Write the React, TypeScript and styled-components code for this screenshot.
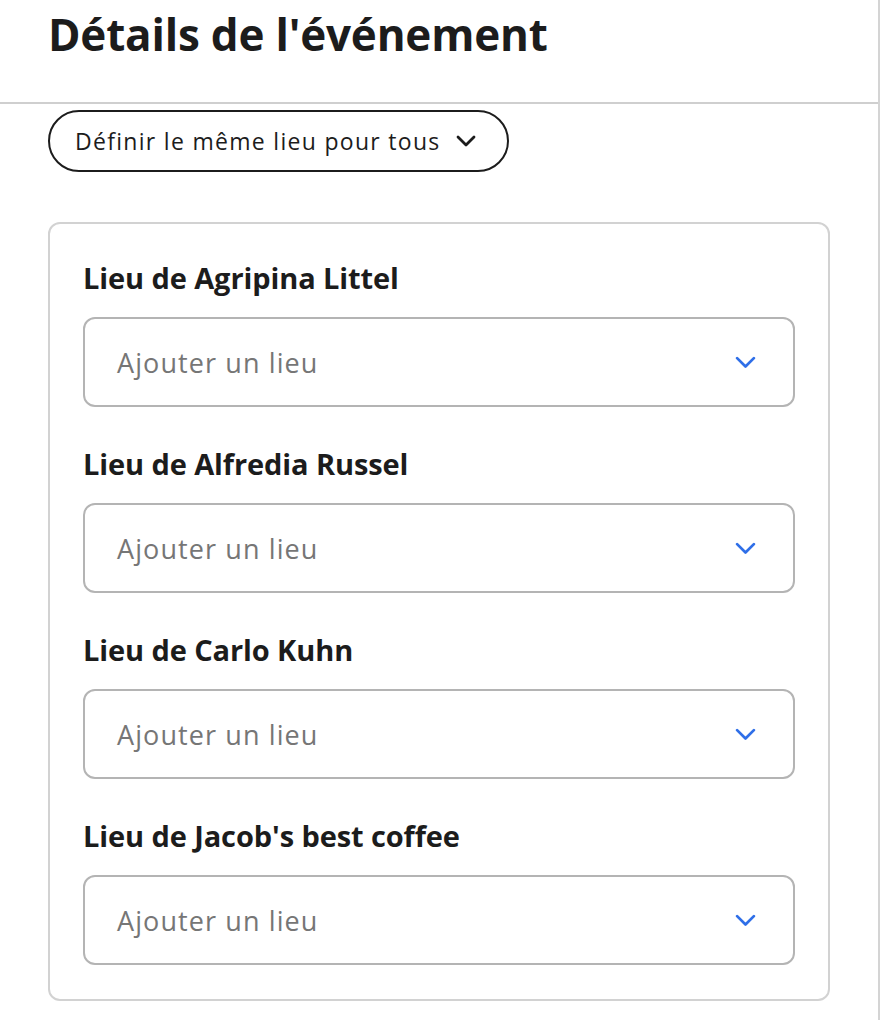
import React from 'react';
import styled, { createGlobalStyle } from 'styled-components';

const GlobalStyle = createGlobalStyle`
    html, body {
        margin: 0;
        padding: 0;
        background: #fff;
    }
    body {
        font-family: 'Open Sans', Lato, 'Liberation Sans', sans-serif;
        color: #1a1a1a;
    }
`;

const Page = styled.div`
    width: 878px;
    height: 1020px;
    border-right: 2px solid #d4d4d4;
    overflow: hidden;
`;

const Header = styled.header`
    height: 102px;
    border-bottom: 2px solid #cfcfcf;
    padding: 0 48px;
    display: flex;
    align-items: flex-start;
`;

const Title = styled.h1`
    margin: 4px 0 0;
    font-size: 44px;
    font-weight: 700;
    line-height: 60px;
    letter-spacing: -0.2px;
    color: #1c1c1c;
`;

const Body = styled.section`
    padding: 6px 48px 0;
    display: flex;
    flex-direction: column;
    align-items: flex-start;
    gap: 50px;
`;

const PillButton = styled.button`
    height: 62px;
    padding: 0 31px 0 25px;
    border: 2px solid #1c1c1c;
    border-radius: 31px;
    background: #fff;
    display: flex;
    align-items: center;
    gap: 15px;
    font-family: inherit;
    font-size: 23px;
    letter-spacing: 1.3px;
    color: #1c1c1c;
    cursor: pointer;
`;

const Card = styled.div`
    width: 782px;
    box-sizing: border-box;
    border: 2px solid #d2d2d2;
    border-radius: 12px;
    padding: 36px 33px 34px;
    display: flex;
    flex-direction: column;
    gap: 39px;
`;

const Field = styled.div`
    display: flex;
    flex-direction: column;
    gap: 21px;
`;

const Label = styled.label`
    font-size: 29px;
    font-weight: 700;
    line-height: 36px;
    letter-spacing: -0.1px;
    color: #1c1c1c;
`;

const Select = styled.div`
    height: 90px;
    box-sizing: border-box;
    border: 2px solid #b4b4b4;
    border-radius: 12px;
    padding: 0 37px 0 32px;
    display: flex;
    align-items: center;
    justify-content: space-between;
`;

const Placeholder = styled.span`
    font-size: 27px;
    letter-spacing: 1.1px;
    color: #767676;
`;

const Chevron = ({ color, width, stroke }: { color: string; width: number; stroke: number }) => (
    <svg width={width} height={width * 0.6} viewBox="0 0 20 12" fill="none">
        <path d="M2 2l8 8 8-8" stroke={color} strokeWidth={stroke} strokeLinecap="round" strokeLinejoin="round" />
    </svg>
);

const people = ['Agripina Littel', 'Alfredia Russel', 'Carlo Kuhn', "Jacob's best coffee"];

export default function App() {
    return (
        <Page>
            <GlobalStyle />
            <Header>
                <Title>Détails de l'événement</Title>
            </Header>
            <Body>
                <PillButton>
                    Définir le même lieu pour tous
                    <Chevron color="#1c1c1c" width={20} stroke={2.8} />
                </PillButton>
                <Card>
                    {people.map((name) => (
                        <Field key={name}>
                            <Label>Lieu de {name}</Label>
                            <Select>
                                <Placeholder>Ajouter un lieu</Placeholder>
                                <Chevron color="#2f6fe8" width={21} stroke={2.6} />
                            </Select>
                        </Field>
                    ))}
                </Card>
            </Body>
        </Page>
    );
}
